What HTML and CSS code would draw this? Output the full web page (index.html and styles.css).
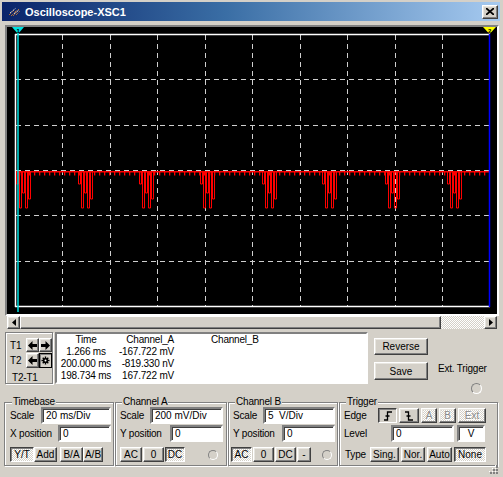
FILE: index.html
```html
<!DOCTYPE html>
<html lang="en">
<head>
  <meta charset="UTF-8">
  <title>Oscilloscope-XSC1</title>
  <link rel="stylesheet" href="styles.css">
</head>
<body>
  <div class="window">
    <div class="titlebar">
      <svg class="app-icon" width="13" height="10" viewBox="0 0 13 10">
        <path d="M1 8L6 3M3 9L9 3M5 9L11 2M8 8L12 4" stroke="#f08a24" stroke-width="1" stroke-dasharray="1 1" fill="none"/>
        <path d="M2 6L8 1M6 7L11 3" stroke="#fff" stroke-width="1" stroke-dasharray="1 1" fill="none"/>
      </svg>
      <span class="title">Oscilloscope-XSC1</span>
      <button class="btn close">
        <svg width="8" height="7" viewBox="0 0 8 7"><path d="M0 0L8 7M8 0L0 7" stroke="#000" stroke-width="1.7"/></svg>
      </button>
    </div>

    <!-- scope display -->
    <div class="screen">
      <svg width="490" height="287" viewBox="0 0 490 287">
        <defs>
          <pattern id="ripple" x="0" y="144" width="5" height="6" patternUnits="userSpaceOnUse">
            <rect x="0" y="0" width="5" height="1.5" fill="#f00"/>
            <rect x="2" y="0" width="1.3" height="4.5" fill="#f00"/>
          </pattern>
          <path id="pulse" fill="none" stroke="#f00" stroke-width="1" d="M0 0.5H0.5V13H2.5V0.5H3.5V37H5.5V0.5H6.5V22H8.5V0.5H9.5V37H11.5V0.5H12.5V28H14.5V0.5"/>
        </defs>
        <rect width="490" height="287" fill="#000"/>
        <g stroke="#cfcfcf" stroke-width="1" stroke-dasharray="5 4" fill="none">
          <path d="M55.5 8V279M103.5 8V279M150.5 8V279M198.5 8V279M245.5 8V279M293.5 8V279M340.5 8V279M388.5 8V279M435.5 8V279"/>
          <path d="M9 52.5H483M9 98.5H483M9 143.5H483M9 188.5H483M9 234.5H483"/>
        </g>
        <path d="M8 7.5H483M8.5 7V280M8 279.5H483" stroke="#fff" stroke-width="1.5" fill="none"/>
        <rect x="9" y="144" width="474" height="6" fill="url(#ripple)"/>
        <use href="#pulse" x="9" y="144"/>
        <use href="#pulse" x="71" y="144"/>
        <use href="#pulse" x="132" y="144"/>
        <use href="#pulse" x="193" y="144"/>
        <use href="#pulse" x="255" y="144"/>
        <use href="#pulse" x="315" y="144"/>
        <use href="#pulse" x="378" y="144"/>
        <use href="#pulse" x="440" y="144"/>
        <!-- cursors -->
        <path d="M11 0V285" stroke="#00e0e0" stroke-width="1.5"/>
        <polygon points="5,0 17,0 11,7" fill="#00e0e0"/>
        <text x="11" y="5.5" class="cursor-num">1</text>
        <path d="M482.5 0V280" stroke="#0000ff" stroke-width="1.5"/>
        <polygon points="476,0 489,0 482.5,7" fill="#ffff00"/>
        <text x="482.5" y="5.5" class="cursor-num">2</text>
      </svg>
    </div>

    <div class="hscroll">
      <button class="btn sb-arrow"><svg width="4" height="7" viewBox="0 0 4 7"><path d="M4 0V7L0 3.5Z"/></svg></button>
      <div class="sb-thumb"></div>
      <div class="sb-track"></div>
      <button class="btn sb-arrow"><svg width="4" height="7" viewBox="0 0 4 7"><path d="M0 0V7L4 3.5Z"/></svg></button>
    </div>

    <div class="readout">
      <div class="cursors">
        <span class="t-label">T1</span>
        <button class="btn arrow"><svg width="9" height="9" viewBox="0 0 9 9"><path d="M0 4.5L4.5 0V3H9V6H4.5V9Z"/></svg></button>
        <button class="btn arrow"><svg width="9" height="9" viewBox="0 0 9 9"><path d="M9 4.5L4.5 0V3H0V6H4.5V9Z"/></svg></button>
        <span class="t-label">T2</span>
        <button class="btn arrow"><svg width="9" height="9" viewBox="0 0 9 9"><path d="M0 4.5L4.5 0V3H9V6H4.5V9Z"/></svg></button>
        <button class="btn arrow focus">
          <svg width="9" height="9" viewBox="0 0 9 9">
            <path d="M4.5 0.5V8.5M0.5 4.5H8.5M1.7 1.7L7.3 7.3M7.3 1.7L1.7 7.3" stroke="#000" stroke-width="1.4"/>
            <circle cx="4.5" cy="4.5" r="2.6"/>
            <circle cx="4.5" cy="4.5" r="1" fill="#fff"/>
          </svg>
        </button>
        <span class="t-diff">T2-T1</span>
      </div>

      <div class="data">
        <span class="c1">Time</span><span class="c2">Channel_A</span><span class="c3">Channel_B</span>
        <span class="c1">1.266 ms</span><span class="c2">-167.722 mV</span><span class="c3"></span>
        <span class="c1">200.000 ms</span><span class="c2">-819.330 nV</span><span class="c3"></span>
        <span class="c1">198.734 ms</span><span class="c2">167.722 mV</span><span class="c3"></span>
      </div>

      <div class="actions">
        <button class="btn reverse">Reverse</button>
        <button class="btn save">Save</button>
      </div>

      <div class="ext">
        <span>Ext. Trigger</span>
        <span class="terminal"></span>
      </div>
    </div>

    <div class="controls">
      <fieldset class="group timebase">
        <legend>Timebase</legend>
        <div class="row"><span>Scale</span><input class="field w70" value="20 ms/Div"></div>
        <div class="row"><span>X position</span><input class="field w53" value="0"></div>
        <div class="row buttons modes">
          <button class="btn on">Y/T</button>
          <button class="btn">Add</button>
          <button class="btn">B/A</button>
          <button class="btn">A/B</button>
        </div>
      </fieldset>

      <fieldset class="group chan-a">
        <legend>Channel A</legend>
        <div class="row"><span>Scale</span><input class="field w73" value="200 mV/Div"></div>
        <div class="row"><span>Y position</span><input class="field w53" value="0"></div>
        <div class="row buttons coupling">
          <button class="btn">AC</button>
          <button class="btn">0</button>
          <button class="btn on">DC</button>
          <span class="terminal"></span>
        </div>
      </fieldset>

      <fieldset class="group chan-b">
        <legend>Channel B</legend>
        <div class="row"><span>Scale</span><input class="field w72" value="5  V/Div"></div>
        <div class="row"><span>Y position</span><input class="field w53" value="0"></div>
        <div class="row buttons coupling-b">
          <button class="btn on">AC</button>
          <button class="btn">0</button>
          <button class="btn">DC</button>
          <button class="btn">-</button>
          <span class="terminal"></span>
        </div>
      </fieldset>

      <fieldset class="group trigger">
        <legend>Trigger</legend>
        <div class="row edge-row">
          <span>Edge</span>
          <button class="btn on-raised">
            <svg width="10" height="10" viewBox="0 0 10 10"><path d="M1 9H4.5V1H9M2.5 5H6.5" stroke="#000" stroke-width="1.3" fill="none"/></svg>
          </button>
          <button class="btn">
            <svg width="10" height="10" viewBox="0 0 10 10"><path d="M1 1H4.5V9H9M2.5 5H6.5" stroke="#000" stroke-width="1.3" fill="none"/></svg>
          </button>
          <button class="btn off">A</button>
          <button class="btn off">B</button>
          <button class="btn off">Ext</button>
        </div>
        <div class="row level-row">
          <span>Level</span>
          <input class="field" value="0">
          <input class="field unit" value="V">
        </div>
        <div class="row buttons type-row">
          <span class="type-label">Type</span>
          <button class="btn">Sing.</button>
          <button class="btn">Nor.</button>
          <button class="btn">Auto</button>
          <button class="btn on">None</button>
        </div>
      </fieldset>
    </div>

    <div class="grip">
      <svg width="11" height="11" viewBox="0 0 11 11">
        <g fill="#808080">
          <rect x="8" y="2" width="2" height="2"/><rect x="5" y="5" width="2" height="2"/><rect x="8" y="5" width="2" height="2"/>
          <rect x="2" y="8" width="2" height="2"/><rect x="5" y="8" width="2" height="2"/><rect x="8" y="8" width="2" height="2"/>
        </g>
        <g fill="#fff">
          <rect x="7" y="1" width="1" height="1"/><rect x="4" y="4" width="1" height="1"/><rect x="7" y="4" width="1" height="1"/>
          <rect x="1" y="7" width="1" height="1"/><rect x="4" y="7" width="1" height="1"/><rect x="7" y="7" width="1" height="1"/>
        </g>
      </svg>
    </div>
  </div>
</body>
</html>
```

FILE: styles.css
```css
* {
  box-sizing: border-box;
}

body {
  margin: 0;
  font-family: "Liberation Sans", Arial, sans-serif;
  font-size: 10px;
  letter-spacing: -0.2px;
  color: #000;
}

.window {
  position: relative;
  width: 503px;
  height: 477px;
  padding-top: 2px;
  background: #d4d0c8;
  overflow: hidden;
}

/* Title bar */
.titlebar {
  display: flex;
  align-items: center;
  height: 19px;
  margin: 0 3px 0 2px;
  padding: 0 2px 0 6px;
  background: linear-gradient(to right, #0a246a, #3a6ea5 45%, #a6caf0);
  color: #fff;
}

.app-icon {
  display: block;
}

.title {
  margin-left: 4px;
  font-size: 11px;
  font-weight: bold;
  letter-spacing: 0;
}

.btn {
  display: flex;
  align-items: center;
  justify-content: center;
  padding: 0;
  font: inherit;
  color: #000;
  background: #d4d0c8;
  border: 1px solid;
  border-color: #fff #404040 #404040 #fff;
  box-shadow: inset -1px -1px #808080, inset 1px 1px #e8e6e0;
}

.btn svg {
  display: block;
}

.btn.on {
  background: repeating-conic-gradient(#fff 0 25%, #d4d0c8 0 50%) 0 0 / 2px 2px;
  border-color: #404040 #fff #fff #404040;
  box-shadow: inset 1px 1px #808080;
}

.btn.on-raised {
  border-color: #404040 #fff #fff #404040;
  box-shadow: inset 1px 1px #808080;
}

.btn.off {
  color: #8a8a8a;
  text-shadow: 1px 1px 0 #fff;
  background: repeating-conic-gradient(#fff 0 25%, #d4d0c8 0 50%) 0 0 / 2px 2px;
}

.close {
  width: 16px;
  height: 14px;
  margin-left: auto;
}

/* Scope screen */
.screen {
  height: 291px;
  margin: 4px 4px 0 5px;
  border: 2px solid;
  border-color: #808080 #fff #fff #808080;
}

.screen svg {
  display: block;
}

.cursor-num {
  font-size: 6px;
  font-weight: bold;
  text-anchor: middle;
  fill: #000;
}

/* Scrollbar */
.hscroll {
  display: flex;
  height: 14px;
  margin: 0 6px 0 7px;
}

.sb-arrow {
  width: 13px;
  height: 13px;
}

.sb-thumb {
  flex: 1;
  height: 13px;
  border: 1px solid;
  border-color: #fff #404040 #404040 #fff;
  box-shadow: inset -1px -1px #808080;
}

.sb-track {
  width: 43px;
  height: 13px;
  background: repeating-conic-gradient(#fff 0 25%, #d4d0c8 0 50%) 0 0 / 2px 2px;
}

/* Cursor readout */
.readout {
  display: flex;
  height: 52px;
  margin-top: 2px;
  padding-left: 5px;
}

.cursors {
  display: grid;
  grid-template-columns: 16px 13px 13px;
  grid-template-rows: 14px 15px auto;
  row-gap: 1px;
  align-content: start;
  width: 48px;
  height: 52px;
  padding: 5px 0 0 4px;
  border: 1px solid #808080;
  box-shadow: inset 1px 1px #fff, 1px 1px #fff;
}

.t-label {
  align-self: center;
}

.cursors .arrow {
  width: 13px;
}

.cursors .focus {
  border-color: #000;
  box-shadow: inset 1px 1px #808080;
}

.t-diff {
  grid-column: 1 / -1;
  margin: 3px 0 0 2px;
  line-height: 11px;
}

.data {
  display: grid;
  grid-template-columns: 58px 63px 1fr;
  grid-auto-rows: 12px;
  align-content: start;
  width: 313px;
  height: 52px;
  margin-left: 2px;
  line-height: 12px;
  background: #fff;
  border: 2px solid;
  border-color: #808080 #fff #fff #808080;
  white-space: pre;
}

.data .c1 {
  text-align: center;
}

.data .c2 {
  text-align: right;
  padding-right: 4px;
}

.data .c3 {
  padding-left: 33px;
}

.actions {
  display: flex;
  flex-direction: column;
  width: 54px;
  margin-left: 6px;
}

.reverse {
  height: 17px;
  margin-top: 6px;
}

.save {
  height: 18px;
  margin-top: 7px;
}

.ext {
  display: flex;
  flex-direction: column;
  margin-left: 10px;
  padding-top: 31px;
  line-height: 12px;
}

.terminal {
  display: block;
  flex-shrink: 0;
  width: 11px;
  height: 11px;
  border: 1.5px solid;
  border-color: #808080 #fff #fff #808080;
  border-radius: 50%;
}

.ext .terminal {
  margin: 8px 0 0 33px;
}

/* Control groups */
.controls {
  display: flex;
  gap: 1px;
  margin-top: 13px;
  padding-left: 4px;
}

.group {
  height: 69px;
  min-width: 0;
  margin: 0;
  padding: 0 3px 0 4px;
  border: 1px solid #808080;
  box-shadow: inset 1px 1px #fff, 1px 1px #fff;
}

.group legend {
  margin-left: 2px;
  padding: 0 1px;
  line-height: 10px;
  background: #d4d0c8;
}

.timebase {
  width: 110px;
  padding: 0 2px 0 5px;
}

.chan-a {
  width: 112px;
}

.chan-b {
  width: 110px;
  padding-right: 2px;
}

.trigger {
  width: 159px;
}

.row {
  display: flex;
  align-items: center;
  height: 17px;
}

.row + .row {
  margin-top: 1px;
}

.row.buttons {
  height: 15px;
  margin-top: 5px;
}

.row.buttons .btn {
  height: 15px;
}

.field {
  height: 17px;
  margin-left: auto;
  padding: 0 0 0 3px;
  font: inherit;
  color: #000;
  background: #fff;
  border: 2px solid;
  border-color: #808080 #fff #fff #808080;
  box-shadow: inset 1px 1px #404040;
  outline: none;
}

.w53 { width: 53px; }
.w70 { width: 70px; }
.w72 { width: 72px; }
.w73 { width: 73px; }

.modes {
  display: grid;
  grid-template-columns: 24px 23px 23px 23px;
}

.modes .btn:nth-child(3) {
  margin-left: 3px;
  width: 23px;
}

.modes .btn:nth-child(4) {
  margin-left: 3px;
}

.coupling {
  display: grid;
  grid-template-columns: 22px 21px 20px 1fr;
  column-gap: 1px;
}

.coupling-b {
  display: grid;
  grid-template-columns: 21px 21px 21px 14px 1fr;
  column-gap: 1px;
  margin-left: -2px;
}

.coupling .terminal,
.coupling-b .terminal {
  justify-self: end;
  margin-right: 5px;
  width: 10px;
  height: 10px;
}

.coupling-b .terminal {
  margin-right: 3px;
}

.edge-row {
  display: grid;
  grid-template-columns: 32px 19px 20px 16px 17px 28px;
  column-gap: 2px;
}

.edge-row .btn {
  height: 15px;
}

.level-row {
  display: grid;
  grid-template-columns: 44px 63px 28px;
  column-gap: 3px;
}

.level-row .field {
  width: 100%;
}

.level-row .unit {
  text-align: center;
  padding: 0;
}

.type-row {
  display: grid;
  grid-template-columns: 24px 29px 24px 25px 32px;
  column-gap: 2px;
}

.type-label {
  padding-left: 1px;
}

.grip {
  position: absolute;
  right: 4px;
  bottom: 2px;
}

.grip svg {
  display: block;
}
```
